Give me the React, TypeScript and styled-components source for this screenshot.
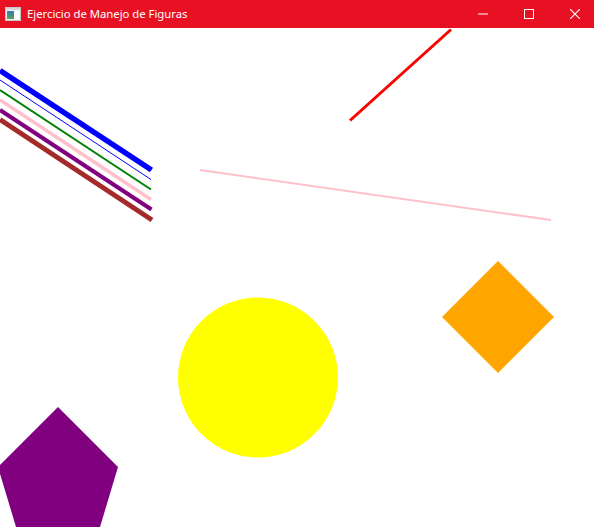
import React from "react";
import styled, { createGlobalStyle } from "styled-components";

const Global = createGlobalStyle`
  html, body { margin: 0; padding: 0; background: #ffffff; }
  body { width: 594px; height: 527px; overflow: hidden; }
`;

const Window = styled.div`
  width: 594px;
  height: 527px;
  display: flex;
  flex-direction: column;
  background: #ffffff;
  overflow: hidden;
`;

const TitleBar = styled.div`
  height: 28px;
  flex: 0 0 28px;
  background: #e81123;
  display: flex;
  align-items: center;
  color: #ffffff;
  font-family: "Noto Sans", "Open Sans", sans-serif;
  font-size: 11.3px;
  overflow: hidden;
`;

const AppIcon = styled.svg`
  width: 16px;
  height: 16px;
  margin-left: 5px;
  margin-right: 6px;
  flex: none;
`;

const Title = styled.span`
  flex: 1;
  white-space: nowrap;
  line-height: 28px;
  padding-bottom: 1px;
`;

const Controls = styled.div`
  display: flex;
  height: 100%;
  margin-right: -4px;
`;

const ControlButton = styled.div`
  width: 46px;
  height: 100%;
  display: flex;
  align-items: center;
  justify-content: center;
`;

const Canvas = styled.svg`
  display: block;
  flex: 1;
  width: 594px;
`;

type Seg = { x1: number; y1: number; x2: number; y2: number; color: string; w: number };

const parallel: Seg[] = [
  { x1: 0, y1: 70.5, x2: 151.5, y2: 170, color: "#0000ff", w: 5.5 },
  { x1: 0, y1: 80, x2: 151, y2: 179.5, color: "#0000ff", w: 1 },
  { x1: 0, y1: 90, x2: 151, y2: 189.5, color: "#008000", w: 2 },
  { x1: 0, y1: 100, x2: 151, y2: 199.5, color: "#ffc0cb", w: 3.5 },
  { x1: 0, y1: 110, x2: 151.5, y2: 209.5, color: "#800080", w: 4 },
  { x1: 0, y1: 119.5, x2: 152, y2: 220, color: "#a52a2a", w: 5 },
];

export default function App() {
  return (
    <>
      <Global />
      <Window>
        <TitleBar>
          <AppIcon viewBox="0 0 16 16">
            <defs>
              <linearGradient id="ig" x1="0" y1="0" x2="0" y2="1">
                <stop offset="0" stopColor="#3a78b8" />
                <stop offset="1" stopColor="#5aa050" />
              </linearGradient>
            </defs>
            <rect x="0.5" y="1.5" width="15" height="13" fill="#f4f4f4" stroke="#c8c8c8" />
            <rect x="1" y="2" width="14" height="2" fill="#d8d8d8" />
            <rect x="2" y="5" width="7" height="8" fill="url(#ig)" />
            <rect x="10" y="5" width="4" height="8" fill="#ffffff" />
          </AppIcon>
          <Title>Ejercicio de Manejo de Figuras</Title>
          <Controls>
            <ControlButton>
              <svg width="10" height="10" viewBox="0 0 10 10">
                <rect x="0" y="4.5" width="10" height="1" fill="#ffffff" />
              </svg>
            </ControlButton>
            <ControlButton>
              <svg width="10" height="10" viewBox="0 0 10 10">
                <rect x="0.5" y="0.5" width="9" height="9" fill="none" stroke="#ffffff" strokeWidth="1" />
              </svg>
            </ControlButton>
            <ControlButton>
              <svg width="10" height="10" viewBox="0 0 10 10">
                <path d="M0 0 L10 10 M10 0 L0 10" stroke="#ffffff" strokeWidth="1.1" />
              </svg>
            </ControlButton>
          </Controls>
        </TitleBar>
        <Canvas viewBox="0 28 594 499" width="594" height="499">
          {parallel.map((s, i) => (
            <line key={i} x1={s.x1} y1={s.y1} x2={s.x2} y2={s.y2} stroke={s.color} strokeWidth={s.w} />
          ))}
          <line x1="350" y1="120.5" x2="451" y2="29.5" stroke="#ff0000" strokeWidth="3" />
          <line x1="200" y1="170" x2="551" y2="220" stroke="#ffc0cb" strokeWidth="2" />
          <circle cx="258" cy="377.5" r="80" fill="#ffff00" />
          <polygon points="498,261 554,317 498,373 442,317" fill="#ffa500" />
          <polygon points="58,407 118,467 94,547 22,547 -2,467" fill="#800080" />
        </Canvas>
      </Window>
    </>
  );
}
